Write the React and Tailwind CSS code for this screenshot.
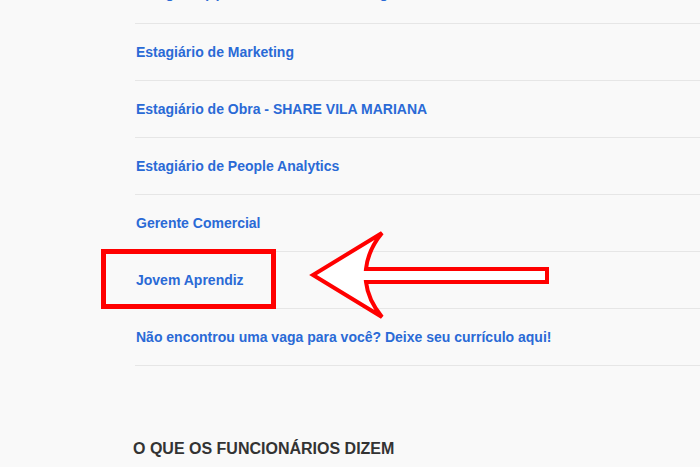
export default function App() {
  const rows = [
    "Estagiário(a) de Produtos e Marketing",
    "Estagiário de Marketing",
    "Estagiário de Obra - SHARE VILA MARIANA",
    "Estagiário de People Analytics",
    "Gerente Comercial",
    "Jovem Aprendiz",
    "Não encontrou uma vaga para você? Deixe seu currículo aqui!",
  ];
  return (
    <div className="relative h-[467px] w-[700px] overflow-hidden bg-[#f9f9f9] font-['Liberation_Sans',Arial,sans-serif]">
      <div className="pl-[135px]">
        <ul className="mt-[-33px]">
          {rows.map((r, i) => (
            <li
              key={i}
              className={`flex h-[57px] items-center border-b border-[#e6e6e6] pl-px text-[14px] font-bold text-[#2a6ad6] ${i === 0 ? "pb-[3px]" : ""}`}
            >
              {r}
            </li>
          ))}
        </ul>
      </div>
      <h2 className="mt-[71px] pl-[133px] text-[16px] leading-6 font-bold text-[#333333]">
        O QUE OS FUNCIONÁRIOS DIZEM
      </h2>

      <div className="absolute left-[101px] top-[249px] h-[60px] w-[175px] border-[5px] border-[#ff0000]" />

      <svg
        className="absolute left-0 top-0"
        width="700"
        height="467"
        viewBox="0 0 700 467"
      >
        <path
          d="M547,269 L366,269 Q368,250 382,233 Q346,255 313,275 Q346,295 382,317 Q368,300 366,282 L547,282 Z"
          fill="#ffffff"
          stroke="#ff0000"
          strokeWidth="4"
          strokeLinejoin="miter"
        />
      </svg>
    </div>
  );
}
